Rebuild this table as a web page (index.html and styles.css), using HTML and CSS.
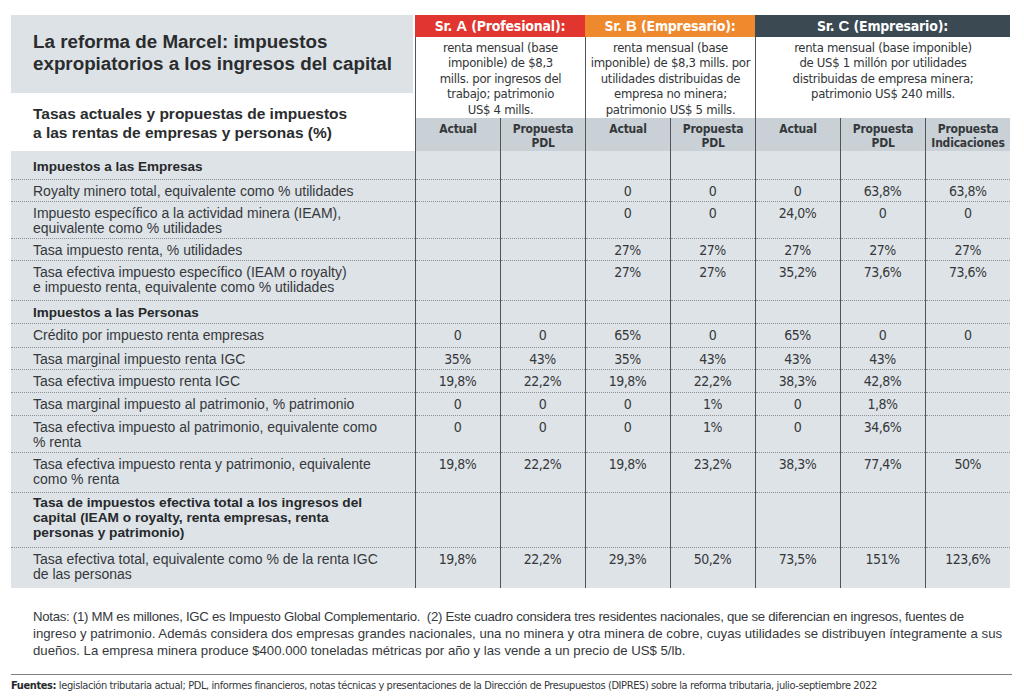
FILE: index.html
```html
<!DOCTYPE html>
<html lang="es">
<head>
<meta charset="utf-8">
<title>La reforma de Marcel</title>
<link rel="stylesheet" href="styles.css">
</head>
<body>
<div class="page">
  <div class="graphic">
    <div class="head">
      <div class="titles">
        <div class="titlebox">
          <h1>La reforma de Marcel: impuestos<br>expropiatorios a los ingresos del capital</h1>
        </div>
        <div class="subtitle">
          <h2>Tasas actuales y propuestas de impuestos<br>a las rentas de empresas y personas (%)</h2>
        </div>
      </div>
      <div class="persons">
        <div class="person pa">
          <div class="phead red">Sr. <b>A</b> (Profesional):</div>
          <div class="pdesc">renta mensual (base<br>imponible) de $8,3<br>mills. por ingresos del<br>trabajo; patrimonio<br>US$ 4 mills.</div>
          <div class="psub two"><span>Actual</span><span>Propuesta<br>PDL</span></div>
        </div>
        <div class="person pb">
          <div class="phead orange">Sr. <b>B</b> (Empresario):</div>
          <div class="pdesc">renta mensual (base<br>imponible) de $8,3 mills. por<br>utilidades distribuidas de<br>empresa no minera;<br>patrimonio US$ 5 mills.</div>
          <div class="psub two"><span>Actual</span><span>Propuesta<br>PDL</span></div>
        </div>
        <div class="person pc">
          <div class="phead slate">Sr. <b>C</b> (Empresario):</div>
          <div class="pdesc">renta mensual (base imponible)<br>de US$ 1 millón por utilidades<br>distribuidas de empresa minera;<br>patrimonio US$ 240 mills.</div>
          <div class="psub three"><span>Actual</span><span>Propuesta<br>PDL</span><span>Propuesta<br>Indicaciones</span></div>
        </div>
      </div>
    </div>

    <table class="data">
      <colgroup>
        <col class="c-label">
        <col class="c-val"><col class="c-val"><col class="c-val"><col class="c-val"><col class="c-val"><col class="c-val"><col class="c-val">
      </colgroup>
      <tbody>
        <tr class="r-sec1 first"><td class="l sec">Impuestos a las Empresas</td><td class="v"></td><td class="v"></td><td class="v"></td><td class="v"></td><td class="v"></td><td class="v"></td><td class="v"></td></tr>
        <tr class="r22"><td class="l">Royalty minero total, equivalente como % utilidades</td><td class="v"></td><td class="v"></td><td class="v">0</td><td class="v">0</td><td class="v">0</td><td class="v">63,8%</td><td class="v">63,8%</td></tr>
        <tr class="r37"><td class="l">Impuesto específico a la actividad minera (IEAM),<br>equivalente como % utilidades</td><td class="v"></td><td class="v"></td><td class="v">0</td><td class="v">0</td><td class="v">24,0%</td><td class="v">0</td><td class="v">0</td></tr>
        <tr class="r22"><td class="l">Tasa impuesto renta, % utilidades</td><td class="v"></td><td class="v"></td><td class="v">27%</td><td class="v">27%</td><td class="v">27%</td><td class="v">27%</td><td class="v">27%</td></tr>
        <tr class="r40"><td class="l">Tasa efectiva impuesto específico (IEAM o royalty)<br>e impuesto renta, equivalente como % utilidades</td><td class="v"></td><td class="v"></td><td class="v">27%</td><td class="v">27%</td><td class="v">35,2%</td><td class="v">73,6%</td><td class="v">73,6%</td></tr>
        <tr class="r23"><td class="l sec">Impuestos a las Personas</td><td class="v"></td><td class="v"></td><td class="v"></td><td class="v"></td><td class="v"></td><td class="v"></td><td class="v"></td></tr>
        <tr class="r24"><td class="l">Crédito por impuesto renta empresas</td><td class="v">0</td><td class="v">0</td><td class="v">65%</td><td class="v">0</td><td class="v">65%</td><td class="v">0</td><td class="v">0</td></tr>
        <tr class="r22"><td class="l">Tasa marginal impuesto renta IGC</td><td class="v">35%</td><td class="v">43%</td><td class="v">35%</td><td class="v">43%</td><td class="v">43%</td><td class="v">43%</td><td class="v"></td></tr>
        <tr class="r23"><td class="l">Tasa efectiva impuesto renta IGC</td><td class="v">19,8%</td><td class="v">22,2%</td><td class="v">19,8%</td><td class="v">22,2%</td><td class="v">38,3%</td><td class="v">42,8%</td><td class="v"></td></tr>
        <tr class="r23"><td class="l">Tasa marginal impuesto al patrimonio, % patrimonio</td><td class="v">0</td><td class="v">0</td><td class="v">0</td><td class="v">1%</td><td class="v">0</td><td class="v">1,8%</td><td class="v"></td></tr>
        <tr class="r37"><td class="l">Tasa efectiva impuesto al patrimonio, equivalente como<br>% renta</td><td class="v">0</td><td class="v">0</td><td class="v">0</td><td class="v">1%</td><td class="v">0</td><td class="v">34,6%</td><td class="v"></td></tr>
        <tr class="r40"><td class="l">Tasa efectiva impuesto renta y patrimonio, equivalente<br>como % renta</td><td class="v">19,8%</td><td class="v">22,2%</td><td class="v">19,8%</td><td class="v">23,2%</td><td class="v">38,3%</td><td class="v">77,4%</td><td class="v">50%</td></tr>
        <tr class="r55"><td class="l total">Tasa de impuestos efectiva total a los ingresos del<br>capital (IEAM o royalty, renta empresas, renta<br>personas y patrimonio)</td><td class="v"></td><td class="v"></td><td class="v"></td><td class="v"></td><td class="v"></td><td class="v"></td><td class="v"></td></tr>
        <tr class="r41"><td class="l">Tasa efectiva total, equivalente como % de la renta IGC<br>de las personas</td><td class="v">19,8%</td><td class="v">22,2%</td><td class="v">29,3%</td><td class="v">50,2%</td><td class="v">73,5%</td><td class="v">151%</td><td class="v">123,6%</td></tr>
      </tbody>
    </table>
  </div>

  <p class="notes"><span class="tight">Notas: (1) MM es millones, IGC es Impuesto Global Complementario.&nbsp; (2) Este cuadro considera tres residentes nacionales, que se diferencian en ingresos, fuentes de</span><br>ingreso y patrimonio. Además considera dos empresas grandes nacionales, una no minera y otra minera de cobre, cuyas utilidades se distribuyen íntegramente a sus<br>dueños. La empresa minera produce $400.000 toneladas métricas por año y las vende a un precio de US$ 5/lb.</p>
  <hr class="rule">
  <p class="sources"><b>Fuentes:</b> legislación tributaria actual; PDL, informes financieros, notas técnicas y presentaciones de la Dirección de Presupuestos (DIPRES) sobre la reforma tributaria, julio-septiembre 2022</p>
</div>
</body>
</html>
```

FILE: styles.css
```css
html, body {
  margin: 0;
  padding: 0;
  background: #ffffff;
}

body {
  font-family: "Liberation Sans", Arial, sans-serif;
  color: #2f3234;
}

.page {
  padding: 15px 0 0 11px;
  width: 1001px;
}

.graphic {
  width: 999px;
}

/* ---------- header ---------- */
.head {
  display: flex;
  height: 136px;
}

.titles {
  width: 404px;
  display: flex;
  flex-direction: column;
}

.titlebox {
  background: #dde2e6;
  height: 78px;
  width: 402px;
  box-sizing: border-box;
  padding: 16px 0 0 22px;
}

h1 {
  margin: 0;
  font-size: 18.8px;
  line-height: 22px;
  font-weight: bold;
  color: #2a2c2e;
  white-space: nowrap;
}

.subtitle {
  height: 58px;
  box-sizing: border-box;
  padding: 11px 0 0 22px;
}

h2 {
  margin: 0;
  font-size: 15.5px;
  line-height: 19px;
  font-weight: bold;
  color: #2a2c2e;
  white-space: nowrap;
}

.persons {
  display: flex;
  width: 595px;
}

.person {
  display: flex;
  flex-direction: column;
}

.pa, .pb { width: 170px; }
.pc { width: 255px; }

.phead {
  height: 22px;
  line-height: 22px;
  text-align: center;
  color: #ffffff;
  font-family: "DejaVu Sans Condensed", "Liberation Sans", sans-serif;
  font-stretch: condensed;
  font-weight: bold;
  font-size: 14px;
  letter-spacing: -0.2px;
  white-space: nowrap;
}

.phead b {
  font-family: "Liberation Sans", Arial, sans-serif;
  font-weight: 900;
  font-size: 15px;
}

.red { background: #e1362f; }
.orange { background: #ef892e; }
.slate { background: #3b4953; }

.pdesc {
  height: 81px;
  box-sizing: border-box;
  padding-top: 3px;
  border-left: 1px solid #4f5459;
  text-align: center;
  font-family: "DejaVu Sans Condensed", "Liberation Sans", sans-serif;
  font-stretch: condensed;
  font-size: 13px;
  letter-spacing: -0.3px;
  line-height: 15.4px;
  color: #333638;
  white-space: nowrap;
}

.psub {
  height: 33px;
  display: grid;
  background: #c9d0d6;
}

.psub.two { grid-template-columns: 85px 85px; }
.psub.three { grid-template-columns: 85px 85px 85px; }

.psub span {
  border-left: 1px solid #4f5459;
  text-align: center;
  padding-top: 4px;
  font-family: "DejaVu Sans Condensed", "Liberation Sans", sans-serif;
  font-stretch: condensed;
  font-weight: bold;
  font-size: 12px;
  letter-spacing: -0.2px;
  line-height: 14px;
  color: #34383b;
}

/* ---------- data table ---------- */
.data {
  width: 999px;
  table-layout: fixed;
  border-collapse: collapse;
  background: #dee3e7;
}

.c-label { width: 404px; }
.c-val { width: 85px; }

.data td {
  padding: 4px 0 0 0;
  vertical-align: top;
  border-top: 1px dotted #8b9196;
  font-size: 14px;
  line-height: 15px;
  box-sizing: border-box;
}

.data tr.first td { border-top: none; }

.data td.l {
  padding-left: 22px;
  color: #35383b;
  white-space: nowrap;
}

.data td.sec {
  font-weight: bold;
  font-size: 13.5px;
  color: #26292b;
}

.data td.total {
  font-weight: bold;
  font-size: 13.7px;
  color: #26292b;
  line-height: 15px;
  padding-top: 2px;
}

.data td.v {
  border-left: 1px solid #4f5459;
  text-align: center;
  font-family: "DejaVu Sans Condensed", "Liberation Sans", sans-serif;
  font-stretch: condensed;
  font-size: 14px;
  letter-spacing: -0.5px;
  color: #35383b;
}

.r-sec1 { height: 28px; }
.r-sec1 td.sec { padding-top: 8px; }
.r22 { height: 22px; }
.r23 { height: 23px; }
.r24 { height: 24px; }
.r37 { height: 37px; }
.r40 { height: 40px; }
.r41 { height: 41px; }
.r55 { height: 55px; }

/* ---------- notes ---------- */
.notes {
  margin: 20px 0 0 0;
  padding-left: 22px;
  font-size: 13.2px;
  line-height: 17px;
  color: #35383b;
  white-space: nowrap;
}

.notes .tight {
  letter-spacing: -0.28px;
}

.rule {
  margin: 15px 0 0 0;
  width: 1001px;
  height: 0;
  border: none;
  border-top: 1px solid #7d8185;
}

.sources {
  margin: 4px 0 0 0;
  font-family: "DejaVu Sans Condensed", "Liberation Sans", sans-serif;
  font-stretch: condensed;
  font-size: 11px;
  letter-spacing: -0.4px;
  line-height: 14px;
  color: #35383b;
  white-space: nowrap;
}

.sources b {
  font-weight: bold;
  color: #26292b;
}
```
